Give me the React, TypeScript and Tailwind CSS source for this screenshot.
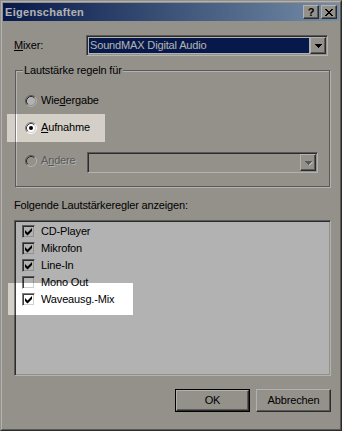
import React from 'react';

const raised =
  'border border-t-white border-l-white border-r-[#404040] border-b-[#404040] shadow-[inset_-1px_-1px_0_#808080,inset_1px_1px_0_#d4d0c8]';
const sunken =
  'border border-t-[#808080] border-l-[#808080] border-r-white border-b-white shadow-[inset_1px_1px_0_#404040,inset_-1px_-1px_0_#d4d0c8]';

function Radio({ checked, disabled }: { checked?: boolean; disabled?: boolean }) {
  return (
    <svg width="12" height="12" viewBox="0 0 12 12" className="shrink-0">
      <circle cx="6" cy="6" r="4.5" fill={disabled ? '#d4d0c8' : '#fff'} />
      <path d="M2.11,9.89A5.5,5.5 0 0 1 9.89,2.11" fill="none" stroke="#808080" />
      <path d="M9.89,2.11A5.5,5.5 0 0 1 2.11,9.89" fill="none" stroke="#fff" />
      <path d="M2.82,9.18A4.5,4.5 0 0 1 9.18,2.82" fill="none" stroke="#404040" />
      <path d="M9.18,2.82A4.5,4.5 0 0 1 2.82,9.18" fill="none" stroke="#d4d0c8" />
      {checked && <circle cx="6" cy="6" r="2" fill="#000" />}
    </svg>
  );
}

function Check({ checked }: { checked?: boolean }) {
  return (
    <div className={`w-[13px] h-[13px] shrink-0 bg-white ${sunken}`}>
      {checked && (
        <svg width="9" height="9" viewBox="0 0 9 9" className="block m-[1px]">
          <path d="M1,3 L3.5,5.5 L8,1 L8,4 L3.5,8.5 L1,6 Z" fill="#000" />
        </svg>
      )}
    </div>
  );
}

function Arrow({ color = '#000' }: { color?: string }) {
  return (
    <svg width="7" height="4" viewBox="0 0 7 4" shapeRendering="crispEdges">
      <path d="M0,0H7V1H6V2H5V3H4V4H3V3H2V2H1V1H0Z" fill={color} />
    </svg>
  );
}

function DropButton({ disabled }: { disabled?: boolean }) {
  return (
    <div className={`w-[16px] shrink-0 bg-[#d4d0c8] flex items-center justify-center ${raised}`}>
      {disabled ? (
        <div className="relative">
          <div className="absolute left-[1px] top-[1px]">
            <Arrow color="#fff" />
          </div>
          <div className="relative">
            <Arrow color="#808080" />
          </div>
        </div>
      ) : (
        <Arrow />
      )}
    </div>
  );
}

const items = [
  { label: 'CD-Player', checked: true },
  { label: 'Mikrofon', checked: true },
  { label: 'Line-In', checked: true },
  { label: 'Mono Out', checked: false },
  { label: 'Waveausg.-Mix', checked: true },
];

export default function App() {
  return (
    <div className="relative w-[342px] h-[431px] font-['Liberation_Sans',Arial,sans-serif] text-[11px] leading-[13px] tracking-[-0.15px] text-black select-none">
      <div className="w-full h-full bg-[#d4d0c8] border border-t-[#d4d0c8] border-l-[#d4d0c8] border-r-[#404040] border-b-[#404040]">
        <div className="w-full h-full border border-t-white border-l-white border-r-[#808080] border-b-[#808080] p-[1px] flex flex-col">
          {/* title bar */}
          <div className="h-[18px] shrink-0 flex items-center pl-[2px] pr-[2px] bg-[linear-gradient(to_right,#0a246a,#a6caf0)]">
            <span className="flex-1 text-white font-bold text-[11px] tracking-[0.3px]">Eigenschaften</span>
            <div className={`w-[16px] h-[14px] bg-[#d4d0c8] flex items-center justify-center font-bold text-[11px] leading-none ${raised}`}>
              ?
            </div>
            <div className={`ml-[2px] w-[16px] h-[14px] bg-[#d4d0c8] flex items-center justify-center ${raised}`}>
              <svg width="8" height="7" viewBox="0 0 8 7" shapeRendering="crispEdges">
                <path
                  d="M0,0H2V1H3V2H5V1H6V0H8V1H7V2H6V3H5V4H6V5H7V6H8V7H6V6H5V5H3V6H2V7H0V6H1V5H2V4H3V3H2V2H1V1H0Z"
                  fill="#000"
                />
              </svg>
            </div>
          </div>

          {/* mixer */}
          <div className="mt-[14px] flex items-center">
            <div className="w-[83px] pl-[11px]">
              <span className="underline">M</span>ixer:
            </div>
            <div className={`w-[242px] h-[21px] bg-white flex p-[1px] ${sunken}`}>
              <div className="flex-1 m-[1px] bg-[#0a246a] text-white flex items-center pl-[1px]">
                SoundMAX Digital Audio
              </div>
              <DropButton />
            </div>
          </div>

          {/* group box */}
          <div className="relative mt-[14px] ml-[12px] w-[315px] h-[117px] shrink-0 border border-[#808080] shadow-[1px_1px_0_#fff,inset_1px_1px_0_#fff]">
            <div className="absolute -top-[7px] left-[7px] px-[1px] bg-[#d4d0c8]">Lautstärke regeln für</div>
            <div className="flex flex-col pt-[21px] pl-[9px]">
              <div className="h-[17px] flex items-center">
                <Radio />
                <span className="ml-[4px]">
                  Wie<span className="underline">d</span>ergabe
                </span>
              </div>
              <div className="mt-[10px] h-[17px] flex items-center">
                <Radio checked />
                <span className="ml-[4px]">
                  <span className="underline">A</span>ufnahme
                </span>
              </div>
              <div className="mt-[16px] flex items-start">
                <div className="w-[62px] h-[17px] flex items-center">
                  <Radio disabled />
                  <span className="ml-[4px] text-[#808080] [text-shadow:1px_1px_0_#fff]">
                    A<span className="underline">n</span>dere
                  </span>
                </div>
                <div className={`w-[231px] h-[21px] bg-[#d4d0c8] flex justify-end p-[1px] ${sunken}`}>
                  <DropButton disabled />
                </div>
              </div>
            </div>
          </div>

          {/* list */}
          <div className="mt-[12px] pl-[11px]">Folgende Lautstärkeregler anzeigen:</div>
          <div className={`mt-[8px] ml-[11px] w-[317px] h-[156px] shrink-0 bg-white pt-[2px] pl-[7px] ${sunken}`}>
            {items.map((it) => (
              <div key={it.label} className="h-[17px] flex items-center">
                <Check checked={it.checked} />
                <span className="ml-[6px]">{it.label}</span>
              </div>
            ))}
          </div>

          {/* buttons */}
          <div className="mt-[13px] flex justify-end gap-[6px] pr-[8px]">
            <div className="w-[75px] h-[23px] border border-black">
              <div className={`w-full h-full bg-[#d4d0c8] flex items-center justify-center ${raised}`}>OK</div>
            </div>
            <div className={`w-[75px] h-[23px] bg-[#d4d0c8] flex items-center justify-center ${raised}`}>
              Abbrechen
            </div>
          </div>
        </div>
      </div>

      {/* dimming with two spotlights */}
      <div className="pointer-events-none absolute inset-0 bg-black/30 [clip-path:path(evenodd,'M0,0H342V431H0ZM7,114H105V142H7ZM8,283H133V315H8Z')]" />
    </div>
  );
}
